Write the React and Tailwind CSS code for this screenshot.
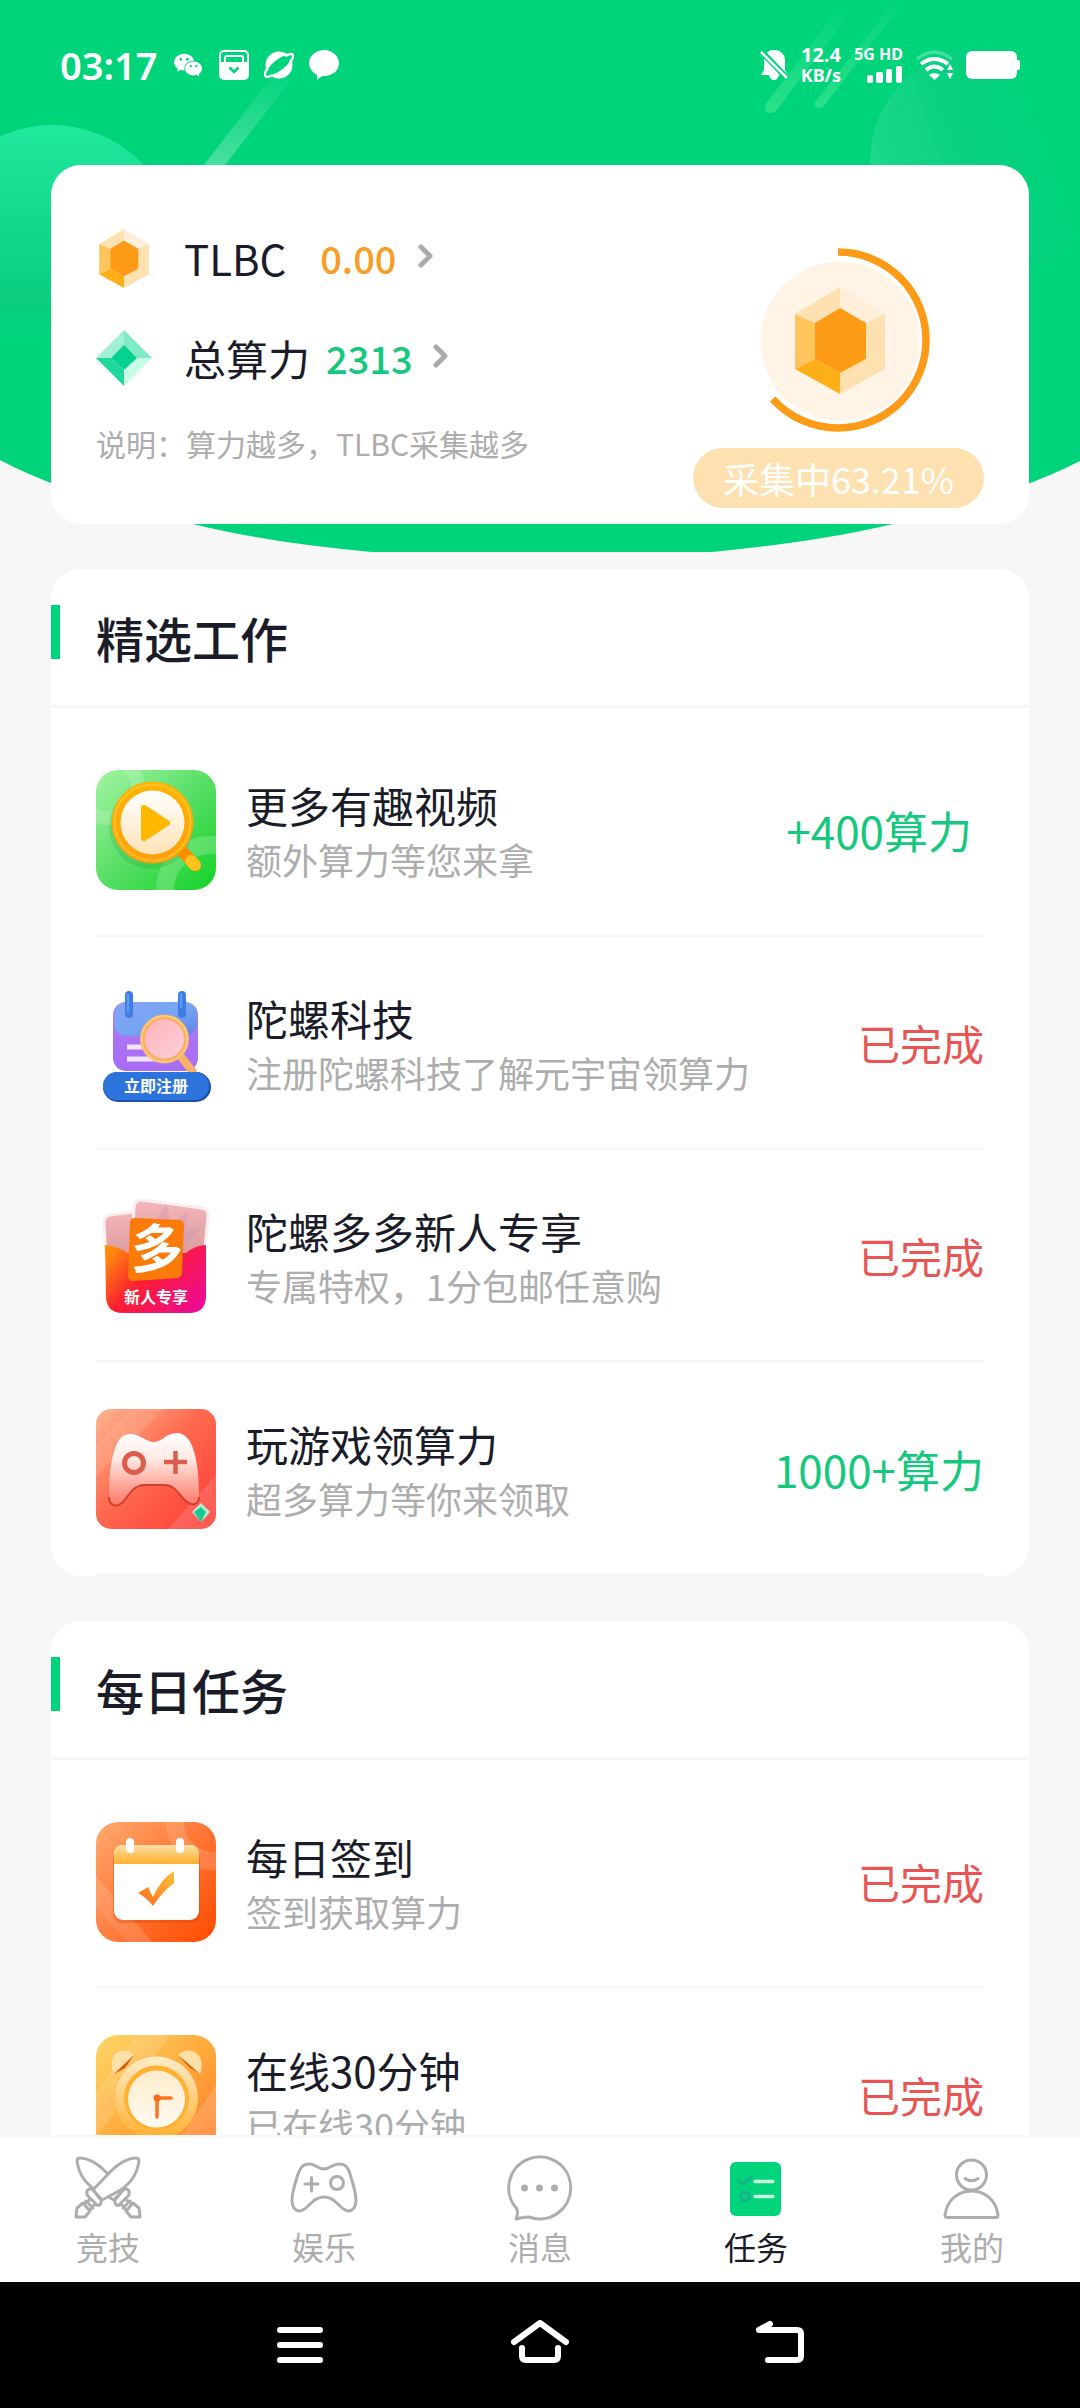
import React, { useState } from 'react';
import { AiFillWechat } from 'react-icons/ai';

const VideoIcon = () => (
  <svg viewBox="0 0 120 120" className="w-full h-full">
    <defs>
      <linearGradient id="videoBg" x1="0" y1="0" x2="1" y2="1">
        <stop offset="0" stopColor="#a4f5a4" />
        <stop offset="0.45" stopColor="#5fe06c" />
        <stop offset="1" stopColor="#14d226" />
      </linearGradient>
      <linearGradient id="videoRim" x1="0" y1="0" x2="0" y2="1">
        <stop offset="0" stopColor="#ffb400" />
        <stop offset="1" stopColor="#ff9f0a" />
      </linearGradient>
      <linearGradient id="videoGlass" x1="0" y1="0" x2="0" y2="1">
        <stop offset="0" stopColor="#ffffff" />
        <stop offset="1" stopColor="#ffe3b8" />
      </linearGradient>
      <clipPath id="videoClip">
        <rect width="120" height="120" rx="22" />
      </clipPath>
    </defs>
    <g clipPath="url(#videoClip)">
      <rect width="120" height="120" fill="url(#videoBg)" />
      <circle cx="114" cy="120" r="45" fill="none" stroke="#fff" strokeOpacity="0.2" strokeWidth="18" />
      <circle cx="12" cy="18" r="30" fill="none" stroke="#fff" strokeOpacity="0.18" strokeWidth="14" />
      <circle cx="55" cy="57" r="42" fill="#1f9e3a" opacity="0.22" />
      <path d="M86 81 L99 95" stroke="#f98f00" strokeWidth="12" strokeLinecap="round" />
      <path d="M95 91 L99 95" stroke="#ffc21a" strokeWidth="12" strokeLinecap="round" />
      <circle cx="56.5" cy="52.5" r="41" fill="url(#videoRim)" />
      <circle cx="56.5" cy="52.5" r="38" fill="none" stroke="#ffc93c" strokeWidth="2" opacity="0.7" />
      <circle cx="56.5" cy="52.5" r="32" fill="url(#videoGlass)" />
      <path d="M48 38 L71 53 L48 68 Z" fill="#ffb700" stroke="#ffb700" strokeWidth="6" strokeLinejoin="round" />
    </g>
  </svg>
);

const RegisterIcon = () => (
  <svg viewBox="0 0 120 120" className="w-full h-full">
    <defs>
      <linearGradient id="regBody" x1="0" y1="0" x2="0" y2="1">
        <stop offset="0" stopColor="#b07cf0" />
        <stop offset="1" stopColor="#a86cf6" />
      </linearGradient>
      <linearGradient id="regTop" x1="0" y1="0" x2="1" y2="1">
        <stop offset="0" stopColor="#86a2f6" />
        <stop offset="0.5" stopColor="#76a6f2" />
        <stop offset="1" stopColor="#5d84ea" />
      </linearGradient>
      <linearGradient id="regGlass" x1="0" y1="0" x2="1" y2="1">
        <stop offset="0" stopColor="#ffb3b5" />
        <stop offset="1" stopColor="#fbd0e0" />
      </linearGradient>
    </defs>
    <rect x="17" y="19" width="85" height="69" rx="13" fill="url(#regBody)" />
    <rect x="18" y="19" width="83" height="34" rx="13" fill="url(#regTop)" />
    <path d="M33 12 V31 M86 12 V31" stroke="#3f7de4" strokeWidth="8" strokeLinecap="round" />
    <path d="M32 12 V29 M85 12 V24" stroke="#5f9af2" strokeWidth="2.5" strokeLinecap="round" />
    <path d="M31 64 H50 M31 76 H62" stroke="#f3e3ff" strokeWidth="5" />
    <path d="M86 75 L97 89" stroke="#fbb06a" strokeWidth="8" strokeLinecap="round" />
    <circle cx="68.5" cy="56" r="22" fill="url(#regGlass)" stroke="#f9b265" strokeWidth="5" />
    <circle cx="68.5" cy="56" r="23" fill="none" stroke="#ffcb85" strokeWidth="1.5" />
    <rect x="7" y="89" width="108" height="30" rx="15" fill="#1d4fae" />
    <rect x="7" y="89" width="106" height="28" rx="14" fill="#2c74dc" />
    <text x="60" y="109" textAnchor="middle" fontSize="16" fontWeight="700" fill="#fff">立即注册</text>
  </svg>
);

const NewcomerIcon = () => (
  <svg viewBox="0 0 120 120" className="w-full h-full">
    <defs>
      <linearGradient id="newPocket" x1="0" y1="0.2" x2="1" y2="0.8">
        <stop offset="0" stopColor="#ff8a0c" />
        <stop offset="0.4" stopColor="#fb1f30" />
        <stop offset="1" stopColor="#ee0a92" />
      </linearGradient>
      <linearGradient id="newCard" x1="0" y1="0" x2="0" y2="1">
        <stop offset="0" stopColor="#f6b6bb" />
        <stop offset="1" stopColor="#d99a9a" />
      </linearGradient>
    </defs>
    <path d="M14 19 Q8 20 8 27 L10 62 H60 L44 15 Z" fill="url(#newCard)" stroke="#fbeeee" strokeWidth="3" />
    <path d="M46 4 L106 12 Q113 13 112 21 L108 62 H36 L38 11 Q39 4 46 4 Z" fill="url(#newCard)" stroke="#fbeeee" strokeWidth="3" />
    <path d="M60 24 L70 8 L76 28 L92 14 L90 34 L108 30 L88 50 Z" fill="#c995b6" opacity="0.35" />
    <path d="M9 49 Q22 50 32 57 H90 Q100 49 110 49 V100 Q110 117 93 117 H27 Q10 117 10 100 Z" fill="url(#newPocket)" />
    <path d="M39 22 L84 24 Q88 25 88 29 L86 77 Q86 81 82 82 L37 85 Q32 85 32 80 L34 27 Q34 22 39 22 Z" fill="#fb7a08" />
    <text x="61" y="72" textAnchor="middle" fontSize="52" fontWeight="700" fill="#fff">多</text>
    <text x="60" y="107" textAnchor="middle" fontSize="16" fontWeight="700" fill="#fff">新人专享</text>
  </svg>
);

const GameIcon = () => (
  <svg viewBox="0 0 120 120" className="w-full h-full">
    <defs>
      <linearGradient id="gameBg" x1="0" y1="0" x2="1" y2="1">
        <stop offset="0" stopColor="#ffb592" />
        <stop offset="0.45" stopColor="#ff6a50" />
        <stop offset="1" stopColor="#ff3a34" />
      </linearGradient>
      <linearGradient id="gamePad" x1="0" y1="0" x2="0" y2="1">
        <stop offset="0" stopColor="#ffffff" />
        <stop offset="0.35" stopColor="#ffeae5" />
        <stop offset="1" stopColor="#ff7463" />
      </linearGradient>
      <clipPath id="gameClip">
        <rect width="120" height="120" rx="15" />
      </clipPath>
    </defs>
    <g clipPath="url(#gameClip)">
      <rect width="120" height="120" fill="url(#gameBg)" />
      <path d="M36 0 H68 L0 68 V36 Z" fill="#ffc0a0" opacity="0.25" />
      <path d="M120 66 V120 H72 Z" fill="#ff9a9a" opacity="0.3" />
      <path
        d="M34 25 C44 25 50 33 58 33 C66 33 70 24 81 24 C94 24 99 42 101 56 C103 70 103 80 103 88 C103 96 96 97 91 93 C83 87 80 76 68 76 H48 C37 76 33 87 26 94 C19 99 13 96 13 88 C13 78 13 68 15 56 C18 40 22 25 34 25 Z"
        fill="url(#gamePad)"
      />
      <path d="M103 88 C103 96 96 97 91 93 C83 87 80 76 68 76 H48 C37 76 33 87 26 94 C19 99 13 96 13 88" fill="none" stroke="#d1402f" strokeWidth="2" />
      <circle cx="38" cy="54" r="9.5" fill="none" stroke="#dc5d4c" strokeWidth="5" />
      <path d="M68 53 H91 M79.5 42 V65" stroke="#dc5d4c" strokeWidth="4.5" />
      <path d="M105 94 L114 103 L105 113 L96 103 Z" fill="#b9ecd6" />
      <path d="M105 98 L110 103 L105 113 L98 103 Z" fill="#17c98f" />
    </g>
  </svg>
);

const SignIcon = () => (
  <svg viewBox="0 0 120 120" className="w-full h-full">
    <defs>
      <linearGradient id="signBg" x1="0" y1="0" x2="1" y2="1">
        <stop offset="0" stopColor="#ffab70" />
        <stop offset="0.5" stopColor="#ff7533" />
        <stop offset="1" stopColor="#ff4a00" />
      </linearGradient>
      <linearGradient id="signTop" x1="0" y1="0" x2="0" y2="1">
        <stop offset="0" stopColor="#ffe0a6" />
        <stop offset="1" stopColor="#ffae2b" />
      </linearGradient>
      <linearGradient id="signCheck" x1="1" y1="0" x2="0" y2="1">
        <stop offset="0" stopColor="#ffc13a" />
        <stop offset="1" stopColor="#ff6a1c" />
      </linearGradient>
      <clipPath id="signClip">
        <rect width="120" height="120" rx="22" />
      </clipPath>
    </defs>
    <g clipPath="url(#signClip)">
      <rect width="120" height="120" fill="url(#signBg)" />
      <circle cx="118" cy="0" r="39" fill="none" stroke="#fff" strokeOpacity="0.15" strokeWidth="18" />
      <path d="M0 54 L56 120 H32 L0 86 Z" fill="#fff" opacity="0.16" />
      <path d="M0 86 L32 120 H0 Z" fill="#fff" opacity="0.08" />
      <rect x="17" y="28" width="87" height="73" rx="9" fill="#d94300" opacity="0.35" />
      <rect x="18" y="23" width="85" height="75" rx="9" fill="#ffffff" />
      <path d="M18 42 V32 Q18 23 27 23 H94 Q103 23 103 32 V42 Z" fill="url(#signTop)" />
      <path d="M34 20 V27 M84 20 V27" stroke="#fff" strokeWidth="8" strokeLinecap="round" />
      <path d="M42 71 L52 65 L57 75 Q65 57 78 49 V61 Q66 70 57 84 Q51 76 42 71 Z" fill="url(#signCheck)" />
    </g>
  </svg>
);

const ClockIcon = () => (
  <svg viewBox="0 0 120 120" className="w-full h-full">
    <defs>
      <linearGradient id="clockBg" x1="0" y1="0" x2="1" y2="1">
        <stop offset="0" stopColor="#ffd766" />
        <stop offset="0.5" stopColor="#ffaa3c" />
        <stop offset="1" stopColor="#ff7628" />
      </linearGradient>
      <linearGradient id="clockRim" x1="0" y1="0" x2="0" y2="1">
        <stop offset="0" stopColor="#ffecc9" />
        <stop offset="1" stopColor="#ffb02e" />
      </linearGradient>
      <linearGradient id="clockFace" x1="0" y1="0" x2="0" y2="1">
        <stop offset="0" stopColor="#fdeccb" />
        <stop offset="1" stopColor="#fffaf2" />
      </linearGradient>
      <clipPath id="clockClip">
        <rect width="120" height="120" rx="22" />
      </clipPath>
    </defs>
    <g clipPath="url(#clockClip)">
      <rect width="120" height="120" fill="url(#clockBg)" />
      <path d="M40 0 H74 L0 104 V58 Z" fill="#fff" opacity="0.12" />
      <path d="M120 50 V120 H72 Z" fill="#fff" opacity="0.16" />
      <path d="M18 39 L38 20 C30 12 18 15 16 25 C15 31 16 35 18 39 Z" fill="#ffdfa6" />
      <path d="M104 39 L82 20 C90 12 102 15 105 25 C106 31 106 35 104 39 Z" fill="#ffdfa6" />
      <path d="M18 39 L38 20 L29 33 Z" fill="#d65a0c" />
      <path d="M104 39 L82 20 L93 32 Z" fill="#d65a0c" />
      <circle cx="60.5" cy="63" r="41.5" fill="url(#clockRim)" />
      <circle cx="60.5" cy="63" r="32.5" fill="#ffb133" />
      <circle cx="60.5" cy="64" r="28.5" fill="url(#clockFace)" />
      <path d="M75 63 H61 V82" fill="none" stroke="#f8761d" strokeWidth="3.5" strokeLinecap="round" />
      <circle cx="61" cy="63" r="3.5" fill="#f8691a" />
    </g>
  </svg>
);

// 六边形宝石（TLBC）
const HexGem = ({ className }) => (
  <svg viewBox="0 0 90 107" className={className}>
    <path d="M45 0 V21 L20 36 L0 27 Z" fill="#fee1b1" />
    <path d="M45 0 L90 27 L71 36 L45 21 Z" fill="#feeeda" />
    <path d="M90 27 V82 L45 107 V86 L71 72 V36 Z" fill="#fee1b1" />
    <path d="M0 27 L20 36 V72 L0 82 Z" fill="#fec55c" />
    <path d="M0 82 L20 72 L45 86 V107 Z" fill="#feae16" />
    <path d="M45 21 L71 36 V72 L45 86 L20 72 V36 Z" fill="#fd9b16" />
  </svg>
);

// 菱形宝石（算力）
const DiamondGem = ({ className }) => (
  <svg viewBox="0 0 56 56" className={className}>
    <path d="M28 0 V16 L15 28 H0 Z" fill="#a2f0d4" />
    <path d="M28 0 L56 28 H41 L28 16 Z" fill="#82e9c6" />
    <path d="M0 28 H15 L28 40 V56 Z" fill="#22d79b" />
    <path d="M56 28 L28 56 V40 L41 28 Z" fill="#c6fde4" />
    <path d="M28 15 L41 28 L28 40 L15 28 Z" fill="#05d190" />
  </svg>
);

const Arrow = () => (
  <svg viewBox="0 0 16 24" className="w-4 h-6 ml-5 -mt-1">
    <path d="M3 3 L12 12 L3 21" fill="none" stroke="#ababab" strokeWidth="5" strokeLinecap="round" strokeLinejoin="round" />
  </svg>
);

const sections = [
  {
    title: '精选工作',
    tasks: [
      { icon: VideoIcon, name: '更多有趣视频', desc: '额外算力等您来拿', status: '+400算力', color: 'text-[44px] text-[#14c87d] pr-3' },
      { icon: RegisterIcon, name: '陀螺科技', desc: '注册陀螺科技了解元宇宙领算力', status: '已完成', color: 'text-[42px] text-[#ea5553]' },
      { icon: NewcomerIcon, name: '陀螺多多新人专享', desc: '专属特权，1分包邮任意购', status: '已完成', color: 'text-[42px] text-[#ea5553]' },
      { icon: GameIcon, name: '玩游戏领算力', desc: '超多算力等你来领取', status: '1000+算力', color: 'text-[44px] text-[#14c87d]' },
    ],
  },
  {
    title: '每日任务',
    tasks: [
      { icon: SignIcon, name: '每日签到', desc: '签到获取算力', status: '已完成', color: 'text-[42px] text-[#ea5553]' },
      { icon: ClockIcon, name: '在线30分钟', desc: '已在线30分钟', status: '已完成', color: 'text-[42px] text-[#ea5553]' },
    ],
  },
];

const Sword = () => (
  <>
    <path d="M19 37 L36 19 C44 11 53 5 62 5 C66 5 65 9 64 13 C61 26 52 34 43 39 L28 47 Z" />
    <path d="M17 46 L9 51 M21 51 L15 58 M12 48 L19 55" />
    <path d="M13 38 C14 36 17 35 19 37 L27 47 C28 50 26 53 23 52 L13 42 Z" />
    <path d="M9 50 L3 55 L2 64 H11 L16 58 Z" />
  </>
);

const tabs = [
  {
    name: '竞技',
    icon: (
      <>
        <g transform="translate(68 0) scale(-1 1)"><Sword /></g>
        <g fill="#fff"><Sword /></g>
      </>
    ),
  },
  {
    name: '娱乐',
    icon: (
      <>
        <path d="M19 11 C25 10 27 16 34 16 C41 16 43 10 50 11 C56 11 59 17 60 21 C63 31 66 39 66 47 C66 55 62 58 58 58 C50 57 46 44 34 44 C22 44 18 57 10 58 C6 58 2 55 2 47 C2 39 5 31 8 21 C10 16 12 11 19 11 Z" />
        <path d="M15 31 H28 M21.5 24.5 V38" />
        <circle cx="47" cy="30" r="6.5" />
      </>
    ),
  },
  {
    name: '消息',
    icon: (
      <>
        <path d="M11 56 A31 31 0 1 1 23 64 C18 64 15 65 10 66 C12 62 12 60 11 56 Z" />
        <g fill="#adadad" stroke="none">
          <circle cx="18.5" cy="35" r="3.5" />
          <circle cx="33.5" cy="35" r="3.5" />
          <circle cx="48.5" cy="35" r="3.5" />
        </g>
      </>
    ),
  },
  {
    name: '任务',
    icon: (
      <>
        <rect x="8" y="9" width="51" height="54" rx="6" fill="#00d47b" stroke="none" />
        <path d="M17 28 L21 31 L29 24" stroke="#1ab28a" />
        <circle cx="23" cy="43.5" r="4.5" stroke="#1ab28a" />
        <path d="M33 28.5 H51 M33 43.5 H51" stroke="#c9fbe2" strokeWidth="3.5" />
      </>
    ),
  },
  {
    name: '我的',
    icon: (
      <>
        <circle cx="33.5" cy="22" r="15" />
        <path d="M7 62 C9 47 20 38 33.5 38 C47 38 58 47 60 62 Q60 64.5 58 64.5 H9 Q7 64.5 7 62 Z" />
        <path d="M27 25.5 Q33.5 30 40 25.5" />
      </>
    ),
  },
];

const HeaderBackground = () => (
  <svg viewBox="0 0 1080 552" preserveAspectRatio="none" className="absolute inset-x-0 top-0 w-full h-[552px]">
    <defs>
      <linearGradient id="bubbleLeft" x1="0" y1="0" x2="0" y2="1">
        <stop offset="0" stopColor="#20e89c" />
        <stop offset="0.7" stopColor="#0acd80" />
        <stop offset="0.85" stopColor="#00d47b" />
      </linearGradient>
      <linearGradient id="bubbleRight" x1="0" y1="0.5" x2="0.7" y2="0.25">
        <stop offset="0" stopColor="#1cd88b" />
        <stop offset="0.6" stopColor="#08cf7f" />
        <stop offset="1" stopColor="#00d47b" />
      </linearGradient>
      <linearGradient id="beam" x1="0" y1="1" x2="0" y2="0">
        <stop offset="0" stopColor="#fff" stopOpacity="0.28" />
        <stop offset="1" stopColor="#fff" stopOpacity="0.02" />
      </linearGradient>
      <linearGradient id="beamThin" x1="0" y1="1" x2="0" y2="0">
        <stop offset="0" stopColor="#8affa8" stopOpacity="0.3" />
        <stop offset="1" stopColor="#8affa8" stopOpacity="0.02" />
      </linearGradient>
    </defs>
    <path d="M0 0 H1080 V461 C1020 491 960 508 893 524 C830 539 770 546 712 552 H372 C310 546 250 538 193 524 C120 508 55 489 0 460 Z" fill="#00d47b" />
    <circle cx="52" cy="250" r="125" fill="url(#bubbleLeft)" />
    <circle cx="985" cy="162" r="115" fill="url(#bubbleRight)" />
    <path d="M204 165 L272 76 H294 L225 165 Z" fill="url(#beam)" />
    <path d="M765 105 L838 9 L847 17 L776 111 Q769 116 765 110 Z" fill="url(#beamThin)" />
    <path d="M815 102 L896 0 H905 L824 106 Q818 110 815 106 Z" fill="url(#beamThin)" />
  </svg>
);

const StatusBar = () => (
  <div className="flex items-center justify-between h-[129px] px-[60px] text-white font-['Noto_Sans','Noto_Sans_CJK_SC',sans-serif]">
    <div className="flex items-center gap-[15px]">
      <span className="text-[38px] leading-none font-semibold">03:17</span>
      <AiFillWechat className="w-8 h-8" />
      <svg viewBox="0 0 30 30" className="w-[30px] h-[30px]">
        <rect x="1" y="1" width="28" height="28" rx="4" fill="none" stroke="#fff" strokeWidth="2" />
        <path d="M1 12 H29 V26 Q29 29 26 29 H4 Q1 29 1 26 Z" fill="#fff" />
        <path d="M6 12 V8 Q6 6 8 6 H22 Q24 6 24 8 V12" fill="none" stroke="#fff" strokeWidth="2" />
        <path d="M10.5 17.5 L15 22 L19.5 17.5" fill="none" stroke="#00d47b" strokeWidth="2.5" />
      </svg>
      <svg viewBox="0 0 30 30" className="w-[30px] h-[30px]">
        <circle cx="15" cy="15" r="13.5" fill="#fff" />
        <ellipse cx="15" cy="15" rx="15" ry="5.5" transform="rotate(-38 15 15)" fill="#00d47b" />
        <path d="M4 18 C0 22 0 27 3 27 C5 27 7 26 9 25" fill="none" stroke="#fff" strokeWidth="2.5" />
        <path d="M26 12 C30 8 30 4 27 4 C25 4 23 5 21 6" fill="none" stroke="#fff" strokeWidth="2.5" />
      </svg>
      <svg viewBox="0 0 30 30" className="w-[30px] h-[30px]">
        <path d="M15 0 C23 0 30 6 30 13 C30 21 23 26 15 26 Q12 26 8 30 L8 25 C3 22 0 18 0 13 C0 6 7 0 15 0 Z" fill="#fff" />
      </svg>
    </div>
    <div className="flex items-center gap-[13px] font-bold">
      <svg viewBox="0 0 28 30" className="w-7 h-[30px]">
        <path d="M14 0 C21 0 25 5 25 10 V20 L28 25 H19 Q18 30 14 30 Q10 30 9 25 H1 L4 20 V10 C4 5 7 0 14 0 Z" fill="#fff" />
        <path d="M0 0 L28 29" stroke="#00d47b" strokeWidth="6" />
        <path d="M1 2 L27 28" stroke="#fff" strokeWidth="2.5" />
      </svg>
      <div className="flex flex-col text-center leading-5">
        <span className="text-xl leading-5">12.4</span>
        <span className="text-lg leading-5">KB/s</span>
      </div>
      <div className="flex flex-col items-end gap-1">
        <span className="text-base leading-4">5G HD</span>
        <svg viewBox="0 0 36 17" className="w-9 h-[17px]">
          <g fill="#fff">
            <rect x="0" y="9" width="6" height="8" rx="2" />
            <rect x="9" y="6" width="7" height="11" rx="2" />
            <rect x="19" y="3" width="6" height="14" rx="2" />
            <rect x="29" y="0" width="6" height="17" rx="2" />
          </g>
        </svg>
      </div>
      <svg viewBox="0 0 37 30" className="w-[37px] h-[30px]">
        <g fill="none" stroke="#fff" strokeWidth="4">
          <path d="M1 9 Q18 -5 36 9" opacity="0.25" strokeWidth="3.5" />
          <path d="M5 14 Q18 4 32 14" />
          <path d="M10 20 Q18 13 27 20" />
        </g>
        <path d="M13 25 Q18 21 24 25 L18.5 30 Z" fill="#fff" />
        <path d="M34 14 L37 20 H31 Z M34 29 L37 23 H31 Z" fill="#fff" />
      </svg>
      <svg viewBox="0 0 54 28" className="w-[54px] h-7">
        <rect x="0" y="0" width="51" height="28" rx="6" fill="#fff" />
        <rect x="49" y="9" width="5" height="10" rx="2" fill="#fff" />
      </svg>
    </div>
  </div>
);

const progress = 63.21;

const PowerCard = () => {
  const length = 2 * Math.PI * 88;

  return (
    <section className="flex justify-between rounded-[30px] bg-white px-[45px]">
      <div className="flex flex-col pt-[43px]">
        <a href="#tlbc" className="flex items-center h-[100px]">
          <HexGem className="w-[56px] h-[59px]" />
          <span className="ml-8 text-[42px] leading-none">TLBC</span>
          <span className="ml-8 min-w-20 text-center text-[38px] leading-none font-medium text-[#f99d26]">0.00</span>
          <Arrow />
        </a>
        <a href="#power" className="flex items-center h-[100px]">
          <DiamondGem className="w-[56px] h-[56px]" />
          <span className="ml-8 text-[42px] leading-none">总算力</span>
          <span className="ml-4 text-[38px] leading-none font-medium text-[#14c87d]">2313</span>
          <Arrow />
        </a>
        <p className="text-[30px] leading-[70px] text-[#adadad]">说明：算力越多，TLBC采集越多</p>
      </div>
      <div className="flex flex-col items-center pt-[83px] pb-4">
        <div className="grid place-items-center">
          <svg viewBox="0 0 184 184" className="col-start-1 row-start-1 w-[184px] h-[184px]">
            <circle cx="94" cy="93" r="79.5" fill="#fff4e6" />
            <circle
              cx="92"
              cy="92"
              r="88"
              fill="none"
              stroke="#fd9b16"
              strokeWidth="7.5"
              strokeDasharray={`${(length * progress) / 100} ${length}`}
              transform="rotate(-90 92 92)"
            />
          </svg>
          <HexGem className="col-start-1 row-start-1 w-[90px] h-[107px] ml-1" />
        </div>
        <button className="mt-4 h-[60px] rounded-full bg-[#fee1b1] px-[30px] text-4xl text-white">
          采集中{progress}%
        </button>
      </div>
    </section>
  );
};

const TaskRow = ({ task }) => {
  const Icon = task.icon;

  return (
    <li className="flex items-center border-b-3 border-[#f7f7f7] pt-[46px] pb-[44px]">
      <div className="w-[120px] h-[120px] shrink-0">
        <Icon />
      </div>
      <div className="flex-1 ml-[30px] pt-1">
        <h3 className="text-[42px] leading-[54px]">{task.name}</h3>
        <p className="text-4xl leading-[54px] text-[#adadad]">{task.desc}</p>
      </div>
      <span className={`leading-none ${task.color}`}>{task.status}</span>
    </li>
  );
};

const TaskSection = ({ section }) => (
  <section className="rounded-[30px] bg-white overflow-hidden">
    <div className="flex border-b-3 border-[#f7f7f7]">
      <span className="w-[9px] h-[54px] mt-9 bg-[#00d47b]" />
      <h2 className="ml-9 text-5xl leading-[136px] font-medium">{section.title}</h2>
    </div>
    <ul className="px-[45px] pt-4">
      {section.tasks.map((task) => (
        <TaskRow key={task.name} task={task} />
      ))}
    </ul>
  </section>
);

const TabBar = () => {
  const [active, setActive] = useState('任务');

  return (
    <nav className="grid grid-cols-5 border-t-3 border-[#f7f7f7] bg-white pt-[15px] pb-[10px]">
      {tabs.map((tab) => (
        <button
          key={tab.name}
          onClick={() => setActive(tab.name)}
          className={`flex flex-col items-center text-[32px] leading-[51px] ${active === tab.name ? 'text-[#1a1c2a]' : 'text-[#adadad]'}`}
        >
          <svg viewBox="0 0 68 68" className="w-[68px] h-[68px]" fill="none" stroke="#adadad" strokeWidth="3" strokeLinecap="round" strokeLinejoin="round">
            {tab.icon}
          </svg>
          {tab.name}
        </button>
      ))}
    </nav>
  );
};

const SystemBar = () => (
  <div className="flex justify-center h-[126px] bg-black">
    <button aria-label="菜单" className="flex items-center justify-center w-60">
      <svg viewBox="0 0 60 44" className="w-[60px] h-[44px]" fill="none" stroke="#fff" strokeWidth="6" strokeLinecap="round">
        <path d="M10 7 H50 M10 22 H50 M10 37 H50" />
      </svg>
    </button>
    <button aria-label="主页" className="flex items-center justify-center w-60">
      <svg viewBox="0 0 60 50" className="w-[60px] h-[50px]" fill="none" stroke="#fff" strokeWidth="6" strokeLinecap="round" strokeLinejoin="round">
        <path d="M4 22 L30 3 L56 22 M12 28 V36 Q12 40 16 40 H44 Q48 40 48 36 V28" />
      </svg>
    </button>
    <button aria-label="返回" className="flex items-center justify-center w-60">
      <svg viewBox="0 0 60 50" className="w-[60px] h-[50px]" fill="none" stroke="#fff" strokeWidth="6" strokeLinecap="round" strokeLinejoin="round">
        <path d="M20 4 L9 10 H47 Q51 10 51 14 V36 Q51 40 47 40 H18" />
      </svg>
    </button>
  </div>
);

const App = () => (
  <div className="flex flex-col h-screen overflow-hidden bg-[#f7f7f7] font-['Noto_Sans_CJK_SC',sans-serif] text-[#1a1c2a]">
    <main className="relative flex-1 min-h-0 overflow-hidden">
      <HeaderBackground />
      <div className="relative">
        <StatusBar />
        <div className="flex flex-col gap-[45px] px-[51px] pt-9">
          <PowerCard />
          {sections.map((section) => (
            <TaskSection key={section.title} section={section} />
          ))}
        </div>
      </div>
    </main>
    <TabBar />
    <SystemBar />
  </div>
);

export default App;
